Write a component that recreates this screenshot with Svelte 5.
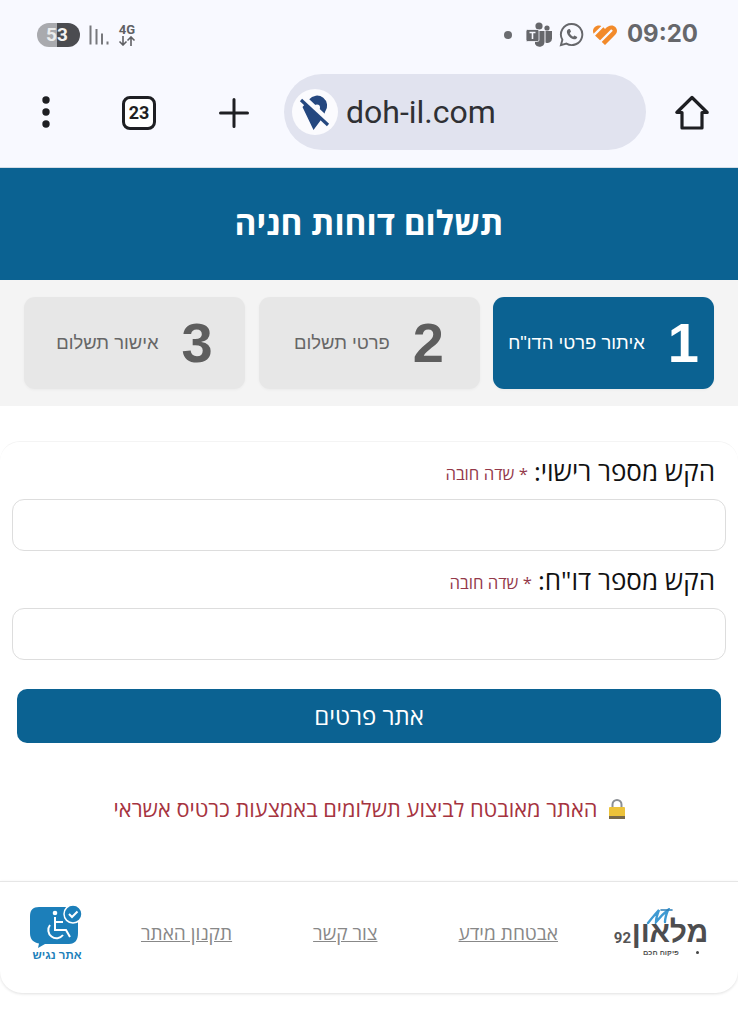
<script>
  const steps = [
    { n: 1, label: 'איתור פרטי הדו"ח', active: true },
    { n: 2, label: 'פרטי תשלום', active: false },
    { n: 3, label: 'אישור תשלום', active: false }
  ];
  const fields = [
    { label: 'הקש מספר רישוי:' },
    { label: 'הקש מספר דו"ח:' }
  ];
  const links = ['אבטחת מידע', 'צור קשר', 'תקנון האתר'];
</script>

<div class="page">
  <div class="chrome">
    <div class="status">
      <div class="status-left">
        <span class="battery"><span class="b5">5</span><span class="b3">3</span></span>
        <svg class="signal" width="20" height="20" viewBox="0 0 20 20"><g fill="#77787c"><rect x="0.500" y="0.500" width="2" height="19"/><rect x="6.500" y="4" width="2" height="15.500"/><rect x="12" y="8.500" width="2" height="11"/><rect x="17.500" y="16.500" width="2" height="3"/></g></svg>
        <span class="net"><span class="net-g">4G</span><svg width="18" height="10" viewBox="0 0 18 10"><g fill="none" stroke="#5f6064" stroke-width="1.600"><path d="M5 0v9M1.500 5.500 5 9l3.500-3.500"/><path d="M13 10V1M9.500 4.500 13 1l3.500 3.500"/></g></svg></span>
      </div>
      <div class="status-right">
        <span class="dot"></span>
        <svg class="teams" width="26" height="26" viewBox="0 0 26 26"><g fill="#66676b"><circle cx="13" cy="4" r="3.600"/><circle cx="21" cy="6" r="2.600"/><path d="M9 9h9.500v11a5 5 0 0 1-9.500 2z"/><path d="M19.500 9H26v7.500a4.500 4.500 0 0 1-6.500 4z"/></g><rect x="0" y="7.500" width="13" height="12" rx="1.500" fill="#66676b" stroke="#f8f9ff" stroke-width=".8"/><path d="M3.500 10.500h6M6.500 10.500v6.500" stroke="#f8f9ff" stroke-width="1.600" fill="none"/></svg>
        <svg class="wa" width="25" height="25" viewBox="0 0 26 26"><path d="M13 2a11 11 0 0 0-9.500 16.500L2 24l5.700-1.500A11 11 0 1 0 13 2z" fill="none" stroke="#66676b" stroke-width="2"/><path d="M9.500 7.500c-1.500 1-1.800 3-.5 5.500 1.500 2.700 4 4.700 6.500 5 2 .2 3.200-1 3.500-2.500l-3-1.500-1.300 1.300c-1.500-.7-2.800-2-3.500-3.500L12.500 10l-1.200-2.700z" fill="#66676b"/></svg>
        <svg class="heart" width="24" height="20" viewBox="0 0 24 20"><path d="M6 .5C2.500.5 0 3 0 6c0 2 1 3.500 2.500 5L12 20l9-9c1.800-1.800 3-3.200 3-5.200C24 3 21.500.500 18.500.500c-2.500 0-4.500 1.300-6.500 3.500C10.200 1.800 8.500.5 6 .5z" fill="#f28a2a"/><path d="M-1 12 10 1M6 18 19 5" stroke="#f8f9ff" stroke-width="2.400" fill="none"/></svg>
        <span class="time">09:20</span>
      </div>
    </div>
    <div class="toolbar">
      <svg class="kebab" width="10" height="34" viewBox="0 0 10 34"><g fill="#1e1f23"><circle cx="5" cy="4" r="3.700"/><circle cx="5" cy="16" r="3.700"/><circle cx="5" cy="28" r="3.700"/></g></svg>
      <span class="tabs">23</span>
      <svg class="plus" width="30" height="30" viewBox="0 0 30 30"><path d="M15 1.500v27M1.500 15h27" stroke="#1e1f23" stroke-width="3" stroke-linecap="round"/></svg>
      <div class="url">
        <span class="site-icon">
          <svg width="46" height="46" viewBox="0 0 46 46">
            <path d="M17 10.500A9.500 9.500 0 0 1 33 23c-.5 2.500-2 5-3 6.500L21.500 41 10.500 18z" fill="#24477f"/>
            <circle cx="25" cy="18.500" r="3" fill="#fbfbfe"/>
            <path d="M11 9l29 27" stroke="#fbfbfe" stroke-width="6.500"/>
            <path d="M9 11l27 25" stroke="#24477f" stroke-width="3.200"/>
          </svg>
        </span>
        <span class="url-text">doh-il.com</span>
      </div>
      <svg class="home" width="36" height="36" viewBox="0 0 36 36"><path d="M18 2.500 2.800 17.500H8V33h20V17.500h5.200z" fill="none" stroke="#1e1f23" stroke-width="3.200" stroke-linejoin="round"/></svg>
    </div>
  </div>

  <header class="title"><h1>תשלום דוחות חניה</h1></header>

  <section class="steps">
    {#each steps as s}
      <div class="step" class:active={s.active}>
        <span class="num">{s.n}</span>
        <span class="step-label">{s.label}</span>
      </div>
    {/each}
  </section>

  <section class="form">
    {#each fields as f}
      <div class="field">
        <div class="label-row">
          <span class="label">{f.label}</span>
          <span class="req">* שדה חובה</span>
        </div>
        <input class="input" type="text" />
      </div>
    {/each}
    <button class="submit">אתר פרטים</button>
    <p class="secure"><span class="lock">
      <svg width="18" height="22" viewBox="0 0 18 22"><path d="M4.500 10V6.500a4.500 4.500 0 0 1 9 0V10" fill="none" stroke="#8b8f94" stroke-width="2"/><rect x="1" y="9" width="16" height="12" rx="1" fill="#ecc23a"/><rect x="1" y="18" width="16" height="3" fill="#77684a"/></svg>
    </span>האתר מאובטח לביצוע תשלומים באמצעות כרטיס אשראי</p>
  </section>

  <footer class="footer">
    <div class="logo">
      <svg class="waves" width="28" height="16" viewBox="0 0 28 16"><g fill="none" stroke-linecap="round"><path d="M2 15C6 10 10 5 13 2c-2 5-3 8-3 12 4-5 8-9 12-12-2 5-3 8-3 12" stroke="#3f9ad2" stroke-width="2.400"/><path d="M15 2h11" stroke="#2d7fb8" stroke-width="1.600"/></g></svg>
      <div class="logo-main">
        <span class="logo-num">92</span>
        <span class="logo-stack">
          <span class="logo-name">מלאון</span>
          <span class="logo-subrow"><span class="logo-dot"></span><span class="logo-sub">פיקוח חכם</span></span>
        </span>
      </div>
    </div>
    <nav class="links">
      {#each links as l}
        <a class="flink" href="#top">{l}</a>
      {/each}
    </nav>
    <div class="a11y">
      <svg width="54" height="44" viewBox="0 0 54 44">
        <path d="M9 3h30c6 0 9 3 9 9v17c0 7-3 11-9 11H15l-7 4 1-4.500C3 38.500 0 35 0 29V12c0-6 3-9 9-9z" fill="#1c7fba"/>
        <g fill="none" stroke="#fff" stroke-width="2"><path d="M25 13v13h11l4 7"/><path d="M25 18h8"/><path d="M20 21a8 8 0 1 0 13 10"/></g>
        <circle cx="25" cy="9" r="2.300" fill="#fff"/>
        <circle cx="43" cy="10" r="9" fill="#1c7fba" stroke="#fff" stroke-width="1.500"/>
        <path d="M39 10l3 3 5.500-5.500" fill="none" stroke="#fff" stroke-width="2"/>
      </svg>
      <span class="a11y-text">אתר נגיש</span>
    </div>
  </footer>
</div>

<style>
  :global(body) { margin: 0; background: #fff; }
  .page { width: 738px; height: 1012px; overflow: hidden; background: #fff; font-family: "Open Sans", "Liberation Sans", sans-serif; }

  .chrome { height: 167px; background: #f8f9ff; border-bottom: 1px solid #d4dde6; box-sizing: content-box; }
  .status { height: 74px; display: flex; justify-content: space-between; align-items: center; padding: 0 40px 5px 37px; box-sizing: border-box; }
  .status-left, .status-right { display: flex; align-items: center; }
  .battery { display: flex; width: 43px; height: 24px; border-radius: 12px; overflow: hidden; font: 700 19px/24px Roboto, sans-serif; }
  .b5 { width: 20px; background: #a9aaae; color: #eceded; text-align: right; }
  .b3 { flex: 1; background: #4b4c50; color: #f3f3f3; text-align: left; }
  .signal { margin-left: 9px; }
  .net { margin-left: 9px; display: flex; flex-direction: column; align-items: center; width: 18px; }
  .net-g { font: 700 13px/12px Roboto, sans-serif; color: #5f6064; }
  .dot { width: 8px; height: 8px; background: #6b6c70; border-radius: 50%; margin-right: 14px; }
  .teams { margin-right: 7px; }
  .wa { margin-right: 9px; }
  .time { font: 700 24px/30px Inter, Roboto, sans-serif; color: #66676b; margin-left: 10px; margin-top: -1px; }

  .toolbar { height: 76px; display: flex; align-items: center; padding: 1px 28px 0 41px; box-sizing: border-box; }
  .kebab { flex: none; }
  .tabs { margin-left: 71px; width: 28px; height: 28px; border: 3.500px solid #1e1f23; border-radius: 8px; background: #fff; display: flex; align-items: center; justify-content: center; font: 700 18px/1 Roboto, sans-serif; color: #1e1f23; flex: none; }
  .plus { margin-left: 63px; flex: none; }
  .url { margin-left: 35px; width: 362px; height: 76px; margin-top: -1px; border-radius: 38px; background: #e1e3ef; display: flex; align-items: center; padding-left: 8px; box-sizing: border-box; flex: none; }
  .site-icon { width: 46px; height: 46px; border-radius: 50%; background: #fbfbfe; display: flex; align-items: center; justify-content: center; flex: none; }
  .url-text { font: 400 32px/1 Roboto, sans-serif; color: #2f3034; margin-left: 8px; }
  .home { margin-left: 28px; flex: none; }

  .title { height: 112px; background: #0b6292; display: flex; align-items: center; justify-content: center; padding-bottom: 3px; box-sizing: border-box; }
  h1 { margin: 0; color: #fff; font-size: 33.400px; font-weight: 700; direction: rtl; line-height: 1; }

  .steps { height: 126px; background: #f4f4f4; direction: rtl; display: flex; gap: 13.500px; padding: 17px 24px; box-sizing: border-box; }
  .step { flex: 1; height: 92px; border-radius: 11px; background: #e7e7e7; display: flex; align-items: center; justify-content: center; color: #666; box-shadow: 0 1px 3px rgba(0,0,0,.04); gap: 23px; }
  .step.active { background: #0b6292; color: #fff; }
  .num { font: 700 56px/1 "Liberation Sans", sans-serif; flex: none; color: #5e5e5e; }
  .active .num { color: #fff; }
  .step-label { font: 400 18.400px/1 "Liberation Sans", sans-serif; white-space: nowrap; }

  .form { margin-top: 35px; height: 440px; border-top: 1px solid #f4f4f4; border-radius: 20px 20px 0 0; padding: 14px 12px 0; box-sizing: border-box; direction: rtl; }
  .field { margin-bottom: 14px; }
  .label-row { display: flex; align-items: center; padding-right: 11px; height: 32px; margin-bottom: 11px; }
  .label { font-size: 26px; line-height: 32px; color: #111; margin-top: -2px; }
  .req { font-size: 16.700px; color: #94394a; margin-right: 6px; margin-top: 2px; }
  .input { display: block; width: 100%; height: 52px; box-sizing: border-box; border: 1px solid #ddd; border-radius: 12px; background: #fff; }
  .submit { display: block; width: 704px; height: 54px; margin: 29px 5px 0; background: #0b6292; border: 0; border-radius: 10px; color: #fff; font: 400 24px/1 "Open Sans", "Liberation Sans", sans-serif; direction: rtl; }
  .secure { margin: 52px 0 0; text-align: center; font-size: 21.800px; line-height: 28px; color: #a6343f; white-space: nowrap; padding-left: 2px; }
  .lock { margin-left: 11px; vertical-align: -3px; display: inline-block; }

  .footer { height: 112px; border-top: 1px solid #e6e6e6; box-shadow: 0 1px 3px rgba(0,0,0,.12); border-radius: 0 0 22px 22px; box-sizing: border-box; display: flex; direction: rtl; align-items: center; justify-content: space-between; padding: 0 30px 10px 30px; }
  .logo { display: flex; flex-direction: column; align-items: flex-end; direction: ltr; width: 93px; }
  .waves { margin: 0 34px -4px 0; }
  .logo-main { display: flex; align-items: flex-start; }
  .logo-num { font: 700 15px/1 Roboto, sans-serif; color: #555; margin-top: 11px; margin-right: 2px; flex: none; }
  .logo-stack { display: flex; flex-direction: column; direction: rtl; width: 75px; }
  .logo-name { font: 700 30px/24px "Liberation Sans", sans-serif; color: #4d4d4f; letter-spacing: -.2px; white-space: nowrap; }
  .logo-subrow { display: flex; align-items: center; justify-content: space-between; padding: 4px 9px 0 10px; }
  .logo-dot { width: 3px; height: 3px; border-radius: 50%; background: #444; }
  .logo-sub { font: 700 7.400px/9px "Liberation Sans", sans-serif; color: #555; white-space: nowrap; }
  .links { display: flex; gap: 81px; align-items: center; }
  .flink { font-size: 19.100px; color: #888; text-decoration: underline; white-space: nowrap; }
  .a11y { display: flex; flex-direction: column; align-items: center; width: 54px; }
  .a11y-text { font: 700 11.500px/12px "Liberation Sans", sans-serif; color: #1c7fba; margin-top: 1px; }
</style>
